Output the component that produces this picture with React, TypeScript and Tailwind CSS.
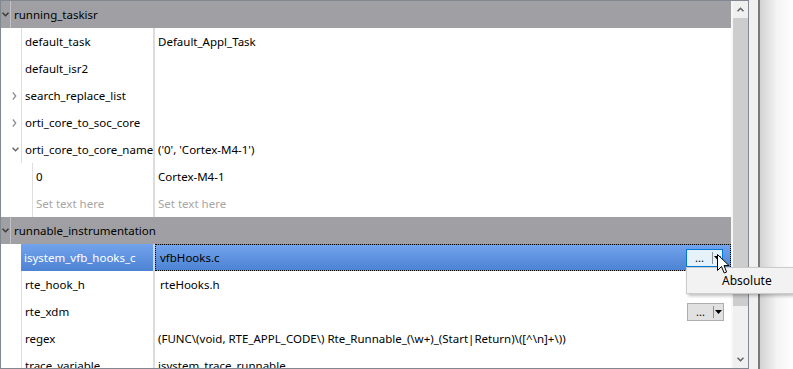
import React from "react";

type Row =
  | { kind: "header"; label: string }
  | {
      kind: "item";
      level: 1 | 2;
      name: string;
      value?: string;
      chevron?: "right" | "down";
      gray?: boolean;
      selected?: boolean;
      button?: boolean;
      editPad?: boolean;
    };

const rows: Row[] = [
  { kind: "header", label: "running_taskisr" },
  { kind: "item", level: 1, name: "default_task", value: "Default_Appl_Task" },
  { kind: "item", level: 1, name: "default_isr2" },
  { kind: "item", level: 1, name: "search_replace_list", chevron: "right" },
  { kind: "item", level: 1, name: "orti_core_to_soc_core", chevron: "right" },
  { kind: "item", level: 1, name: "orti_core_to_core_name", value: "('0', 'Cortex-M4-1')", chevron: "down" },
  { kind: "item", level: 2, name: "0", value: "Cortex-M4-1" },
  { kind: "item", level: 2, name: "Set text here", value: "Set text here", gray: true },
  { kind: "header", label: "runnable_instrumentation" },
  { kind: "item", level: 1, name: "isystem_vfb_hooks_c", value: "vfbHooks.c", selected: true, button: true, editPad: true },
  { kind: "item", level: 1, name: "rte_hook_h", value: "rteHooks.h", editPad: true },
  { kind: "item", level: 1, name: "rte_xdm", button: true },
  {
    kind: "item",
    level: 1,
    name: "regex",
    value: "(FUNC\\(void, RTE_APPL_CODE\\) Rte_Runnable_(\\w+)_(Start|Return)\\([^\\n]+\\))",
  },
  { kind: "item", level: 1, name: "trace_variable", value: "isystem_trace_runnable" },
];

function ChevronDown({ color = "#5a5a5a" }: { color?: string }) {
  return (
    <svg width="7" height="5" viewBox="0 0 7 5">
      <path d="M0.5 0.8 L3.5 3.8 L6.5 0.8" fill="none" stroke={color} strokeWidth="1.5" />
    </svg>
  );
}

function ChevronRight({ color = "#8a8a8a" }: { color?: string }) {
  return (
    <svg width="5" height="8" viewBox="0 0 5 8">
      <path d="M0.8 0.5 L3.8 4 L0.8 7.5" fill="none" stroke={color} strokeWidth="1.2" />
    </svg>
  );
}

function EllipsisButton({ focused }: { focused?: boolean }) {
  return (
    <div
      className={
        "ml-auto mr-[7px] h-[18px] w-[37px] flex border " +
        (focused ? "border-[#0078d7] bg-[#e5f1fb]" : "border-[#adadad] bg-[#e1e1e1]")
      }
    >
      <div className="w-[25px] flex items-end justify-center text-[11px] leading-none pb-[3px] text-black">...</div>
      <div className="w-px bg-[#8f8f8f] my-[2px]" />
      <div className="flex-1 flex items-center justify-center">
        <svg width="7" height="4" viewBox="0 0 7 4">
          <path d="M0 0 L7 0 L3.5 4 Z" fill="#000" />
        </svg>
      </div>
    </div>
  );
}

function HeaderRow({ label }: { label: string }) {
  return (
    <div className="h-[27px] flex bg-[#a0a0a4] shrink-0">
      <div className="w-[10px] flex items-center justify-center border-r border-[#c2c2c6]">
        <ChevronDown color="#3a3a3a" />
      </div>
      <div className="pl-[3px] flex items-center text-black">{label}</div>
    </div>
  );
}

function ItemRow({ r }: { r: Extract<Row, { kind: "item" }> }) {
  const indent = r.level === 1 ? "w-[20px]" : "w-[31px]";
  const nameW = r.level === 1 ? "w-[132px]" : "w-[121px]";
  const sel = r.selected;
  return (
    <div className="h-[27px] flex shrink-0">
      <div className={indent + " flex items-center pl-[11px] bg-white"}>
        {r.chevron === "right" && <ChevronRight />}
        {r.chevron === "down" && <ChevronDown color="#6a6a6a" />}
      </div>
      <div
        className={
          nameW +
          " flex items-center pl-[3px] whitespace-nowrap overflow-hidden " +
          (sel
            ? "bg-linear-to-b from-[#72a3ec] to-[#4d83d4] text-white"
            : "border-l border-[#dedede] bg-white " + (r.gray ? "text-[#a6a6a6]" : "text-black"))
        }
      >
        {r.name}
      </div>
      <div className={"w-[2px] " + (sel ? "bg-[#c9d9f3]" : "bg-[#dcdcdc]")} />
      <div
        className={
          "flex-1 flex items-center whitespace-nowrap overflow-hidden " +
          (r.editPad ? "pl-[5px] " : "pl-[3px] ") +
          (sel
            ? "bg-linear-to-b from-[#72a3ec] to-[#4d83d4] border border-dotted border-black text-black"
            : "bg-white " + (r.gray ? "text-[#a6a6a6]" : "text-black"))
        }
      >
        <span className={sel ? "-ml-px" : ""}>{r.value ?? ""}</span>
        {r.button && <EllipsisButton focused={sel} />}
      </div>
    </div>
  );
}

export default function App() {
  return (
    <div className="relative w-[793px] h-[369px] overflow-hidden bg-white flex font-['Segoe_UI','Noto_Sans',sans-serif] text-[11.5px]">
      {/* tree frame */}
      <div className="w-[749px] h-[369px] border border-[#828790] flex shrink-0">
        <div className="w-[730px] flex flex-col overflow-hidden">
          {rows.map((r, i) =>
            r.kind === "header" ? <HeaderRow key={i} label={r.label} /> : <ItemRow key={i} r={r} />
          )}
        </div>
        {/* scrollbar */}
        <div className="w-[17px] flex flex-col bg-[#f0f0f0] border-l-2 border-[#f7f7f7]">
          <div className="h-[17px] flex items-center justify-center">
            <svg width="7" height="5" viewBox="0 0 7 5">
              <path d="M0.5 4.2 L3.5 1.2 L6.5 4.2" fill="none" stroke="#606060" strokeWidth="1.5" />
            </svg>
          </div>
          <div className="h-[288px] bg-[#cdcdcd]" />
          <div className="flex-1" />
          <div className="h-[17px] flex items-center justify-center">
            <svg width="7" height="5" viewBox="0 0 7 5">
              <path d="M0.5 0.8 L3.5 3.8 L6.5 0.8" fill="none" stroke="#606060" strokeWidth="1.5" />
            </svg>
          </div>
        </div>
      </div>
      {/* right side frame */}
      <div className="w-[9px] h-full bg-[#f0f0f0] shrink-0" />
      <div className="w-[2px] h-full bg-[#7a7a7a] shrink-0" />
      <div className="flex-1 h-full bg-linear-to-r from-[#d2d2d2] via-[#f3f3f3] to-white" />

      {/* popup menu */}
      <div className="absolute left-[686px] top-[267px] w-[108px] h-[27px] bg-[#f2f2f2] border border-[#cccccc] shadow-[2px_2px_3px_rgba(0,0,0,0.25)] flex items-center pl-[35px] text-black text-[12px]">
        Absolute
      </div>

      {/* mouse cursor */}
      <svg className="absolute left-[717px] top-[254px]" width="13" height="21" viewBox="0 0 13 21">
        <path
          d="M0.5 0.5 L0.5 16.5 L4.5 12.5 L7.2 19 L9.6 18 L7 11.6 L12 11.6 Z"
          fill="#fff"
          stroke="#000"
          strokeWidth="1"
          strokeLinejoin="miter"
        />
      </svg>
    </div>
  );
}
